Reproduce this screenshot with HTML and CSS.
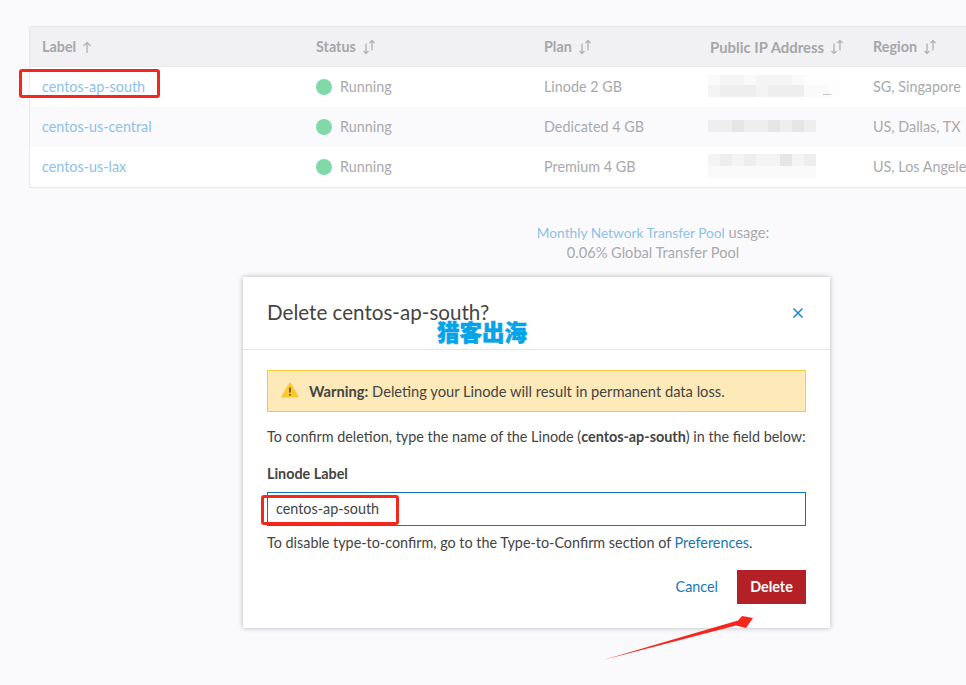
FILE: index.html
```html
<!DOCTYPE html>
<html lang="en">
<head>
<meta charset="utf-8">
<title>Delete Linode</title>
<link rel="stylesheet" href="styles.css">
</head>
<body>
<main class="page">
  <div class="table">
    <div class="row head">
      <div class="cell">Label<svg class="sort" viewBox="0 0 14 14"><path d="M5 13V2.5M1.5 6 5 2.5 8.5 6"/></svg></div>
      <div class="cell">Status<svg class="sort" viewBox="0 0 14 14"><path d="M4 3.5v10M1.5 11 4 13.5 6.5 11M10 10.5V.5M7.5 3 10 .5 12.5 3"/></svg></div>
      <div class="cell">Plan<svg class="sort" viewBox="0 0 14 14"><path d="M4 3.5v10M1.5 11 4 13.5 6.5 11M10 10.5V.5M7.5 3 10 .5 12.5 3"/></svg></div>
      <div class="cell"><span class="ip-head">Public IP Address</span><svg class="sort" viewBox="0 0 14 14"><path d="M4 3.5v10M1.5 11 4 13.5 6.5 11M10 10.5V.5M7.5 3 10 .5 12.5 3"/></svg></div>
      <div class="cell">Region<svg class="sort" viewBox="0 0 14 14"><path d="M4 3.5v10M1.5 11 4 13.5 6.5 11M10 10.5V.5M7.5 3 10 .5 12.5 3"/></svg></div>
    </div>
    <div class="row">
      <div class="cell"><a class="link">centos-ap-south</a></div>
      <div class="cell"><span class="dot"></span>Running</div>
      <div class="cell">Linode 2 GB</div>
      <div class="cell">
        <div class="stack">
          <div class="mosaic m10"><i class="s1"></i><i class="s2"></i><i class="s2"></i><i class="s1"></i><i class="s2"></i><i class="s2"></i><i class="s2"></i><i class="s1"></i><i class="s0"></i><i class="s0"></i><i class="s0"></i></div>
          <div class="mosaic"><i class="s2"></i><i class="s3"></i><i class="s3"></i><i class="s3"></i><i class="s2"></i><i class="s3"></i><i class="s3"></i><i class="s3"></i><i class="s1"></i><i class="s1"></i><i class="s0"></i></div>
          <span class="dash"></span>
        </div>
      </div>
      <div class="cell">SG, Singapore</div>
    </div>
    <div class="row alt">
      <div class="cell"><a class="link">centos-us-central</a></div>
      <div class="cell"><span class="dot"></span>Running</div>
      <div class="cell">Dedicated 4 GB</div>
      <div class="cell"><div class="stack"><div class="mosaic"><i class="s3"></i><i class="s3"></i><i class="s4"></i><i class="s3"></i><i class="s3"></i><i class="s4"></i><i class="s3"></i><i class="s4"></i><i class="s3"></i></div></div></div>
      <div class="cell">US, Dallas, TX</div>
    </div>
    <div class="row">
      <div class="cell"><a class="link">centos-us-lax</a></div>
      <div class="cell"><span class="dot"></span>Running</div>
      <div class="cell">Premium 4 GB</div>
      <div class="cell">
        <div class="stack">
          <div class="mosaic"><i class="s2"></i><i class="s3"></i><i class="s2"></i><i class="s3"></i><i class="s2"></i><i class="s2"></i><i class="s4"></i><i class="s2"></i><i class="s3"></i></div>
          <div class="mosaic"><i class="s1"></i><i class="s1"></i><i class="s1"></i><i class="s1"></i><i class="s1"></i><i class="s1"></i><i class="s1"></i><i class="s1"></i><i class="s1"></i></div>
        </div>
      </div>
      <div class="cell">US, Los Angeles, CA</div>
    </div>
  </div>
  <p class="pool"><a class="link">Monthly Network Transfer Pool</a> usage:<br>0.06% Global Transfer Pool</p>
</main>

<section class="modal">
  <header class="modal-head">
    <h2>Delete centos-ap-south?</h2>
    <svg class="close" viewBox="0 0 12 12"><path d="M1.5 1.5l9 9M10.5 1.5l-9 9"/></svg>
    <span class="watermark">猎客出海</span>
  </header>
  <div class="modal-body">
    <div class="warning">
      <svg class="warn-icon" viewBox="0 0 18 16"><path class="tri" d="M9 1.2 17 14.8H1z"/><path class="bang" d="M9 5.5v5M9 12v1.4"/></svg>
      <span><b>Warning:</b> Deleting your Linode will result in permanent data loss.</span>
    </div>
    <p class="confirm">To confirm deletion, type the name of the Linode (<b>centos-ap-south</b>) in the field below:</p>
    <label class="field-label">Linode Label</label>
    <div class="input">centos-ap-south</div>
    <p class="hint">To disable type-to-confirm, go to the Type-to-Confirm section of <a class="pref">Preferences</a>.</p>
    <div class="actions">
      <a class="cancel">Cancel</a>
      <button class="delete">Delete</button>
    </div>
  </div>
</section>

<div class="mark mark-row"></div>
<div class="mark mark-input"></div>
<svg class="arrow" viewBox="0 0 160 60"><path d="M1 56 136 16.5 140 12 151 14 144 24 134 21.5z"/></svg>
</body>
</html>
```
FILE: styles.css
```css
* { box-sizing: border-box; }
html, body { margin: 0; height: 100%; }
body {
  position: relative;
  overflow: hidden;
  background: #fafafd;
  font-family: Lato, sans-serif;
  font-size: 14.37px;
  color: #a9a9ac;
}
.page { padding: 26px 0 0 29px; }
.table {
  width: 1100px;
  border: 1px solid #e9e9ec;
  background: #fff;
}
.row {
  display: grid;
  grid-template-columns: 274px 228px 166px 163px 1fr;
  height: 40px;
  align-items: center;
}
.row.alt { background: #fafafd; }
.cell { padding: 0 0 2px 12px; display: flex; align-items: center; white-space: nowrap; }
.row.head {
  background: #f1f1f3;
  border-bottom: 1px solid #e9e9ec;
  font-weight: 700;
  color: #a6a6a9;
}
.row.head .cell { padding-bottom: 0; }
.ip-head { font-size: 14.9px; }
.sort { width: 14px; height: 14px; margin-left: 6px; }
.sort path { fill: none; stroke: #b4b4b7; stroke-width: 1.4; }
.link { color: #8dc1e6; }
.dot {
  width: 16px; height: 16px; border-radius: 50%;
  background: #81d9a9; margin: 2px 8px 0 0;
}
.stack { position: relative; margin-left: -2px; }
.mosaic { display: flex; height: 12px; }
.m10 { height: 10px; }
.mosaic i { width: 12px; height: 100%; }
.dash { position: absolute; left: 115px; bottom: 2px; width: 8px; height: 1px; background: #c4c4c4; }
.s0 { background: #fdfdfd; }
.s1 { background: #fafafa; }
.s2 { background: #f4f4f4; }
.s3 { background: #eeeeee; }
.s4 { background: #e6e6e6; }
.pool {
  margin: 35px 0 0 424px;
  width: 400px;
  text-align: center;
  line-height: 20px;
  font-size: 14.6px;
}
.pool .link { font-size: 13.7px; }
.modal {
  position: absolute;
  left: 243px; top: 277px;
  width: 587px; height: 351px;
  background: #fff;
  box-shadow: 0 0 5px rgba(0, 0, 0, .28);
  color: #444;
}
.modal-head {
  position: relative;
  height: 73px;
  border-bottom: 1px solid #e3e3e8;
  padding: 0 25px 0 24px;
  display: flex;
  align-items: center;
  justify-content: space-between;
}
h2 { margin: 0 0 2px; font-size: 20.6px; font-weight: 400; color: #444; }
.close { width: 12px; height: 12px; margin: 0 1px 0 0; }
.close path { fill: none; stroke: #1a87c9; stroke-width: 1.5; }
.watermark {
  position: absolute;
  left: 194px; top: 41px;
  font: 900 22.5px/26px "Noto Sans CJK SC", sans-serif;
  color: #07a3e8;
  -webkit-text-stroke: .6px #07a3e8;
  white-space: nowrap;
}
.modal-body { padding: 20px 24px 0; }
.warning {
  height: 42px;
  background: #feeab9;
  border: 1px solid #fcc839;
  display: flex;
  align-items: center;
  padding-left: 13px;
  gap: 10px;
  font-size: 14.7px;
}
.warn-icon { width: 18px; height: 16px; margin-top: -2px; }
.tri { fill: #fdc72f; stroke: #fdc72f; stroke-width: 1.5; stroke-linejoin: round; }
.bang { fill: none; stroke: #5c4a12; stroke-width: 1.6; }
.confirm { margin: 16px 0 0; line-height: 18px; white-space: nowrap; }
.field-label { display: block; margin-top: 19px; font-weight: 700; line-height: 18px; }
.input {
  margin-top: 9px;
  height: 34px;
  border: 1px solid #0f76b8;
  padding-left: 8px;
  line-height: 31px;
}
.hint { margin: 8px 0 0; line-height: 18px; }
.pref { color: #1a77b5; }
.actions {
  margin-top: 18px;
  display: flex;
  justify-content: flex-end;
  align-items: center;
  gap: 19px;
}
.cancel { color: #1a77b5; margin-bottom: 2px; }
.delete {
  width: 69px; height: 34px;
  border: 0;
  background: #b32127;
  color: #fff;
  font: 700 14.4px Lato, sans-serif;
  padding: 0 0 2px;
}
.mark {
  position: absolute;
  border: 3px solid #f5261b;
  border-radius: 3px;
}
.mark-row { left: 19px; top: 69px; width: 141px; height: 29px; }
.mark-input { left: 261px; top: 495px; width: 138px; height: 30px; }
.arrow { position: absolute; left: 602px; top: 604px; width: 160px; height: 60px; }
.arrow path { fill: #f5261b; }
```
